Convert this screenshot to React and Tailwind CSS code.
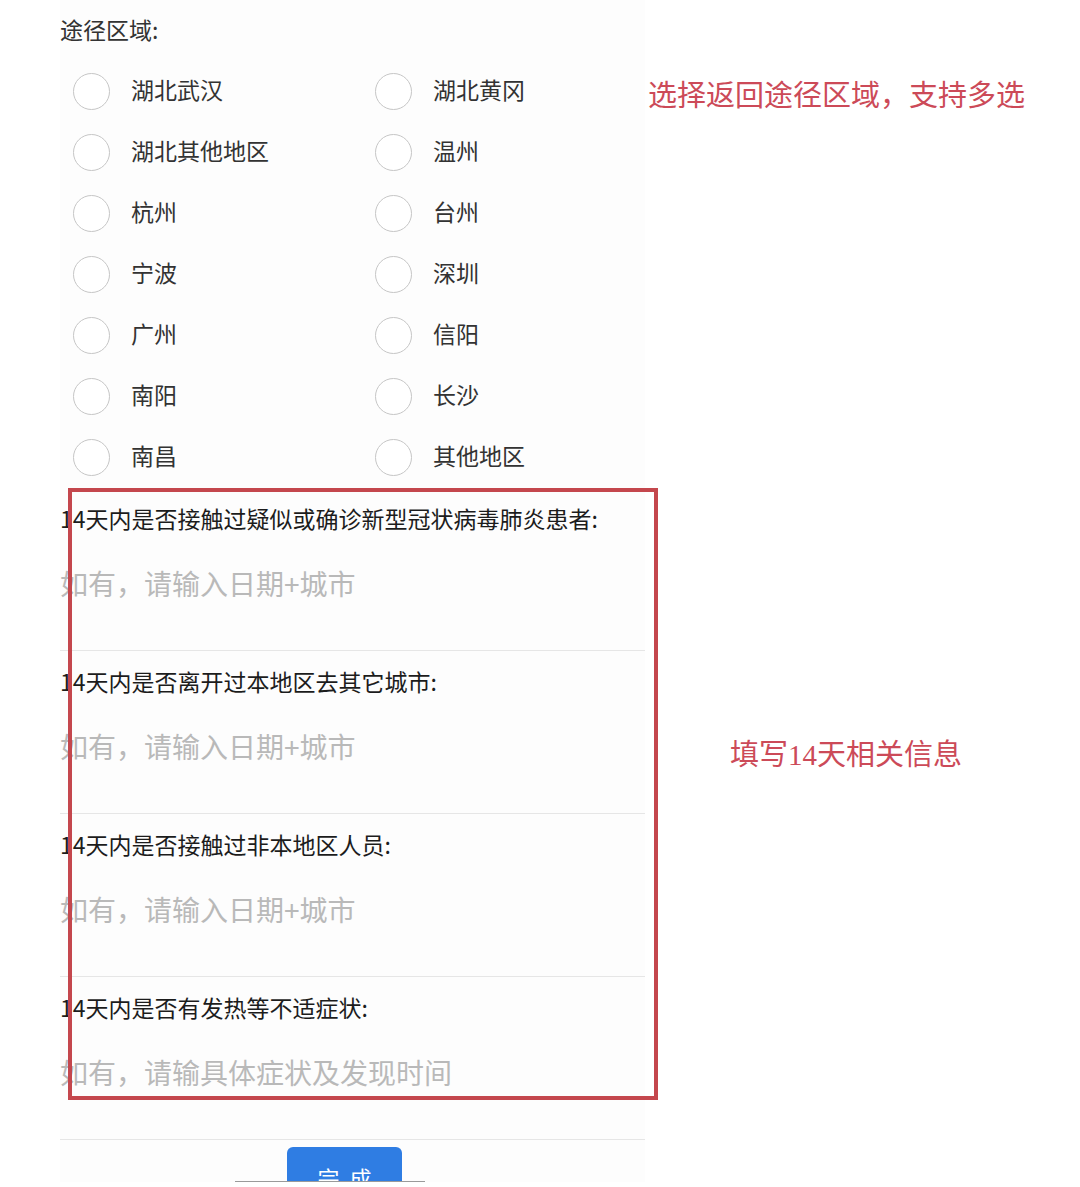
import React from "react";

const cjk = { fontFamily: '"Noto Sans CJK SC", "Noto Sans", sans-serif' };
const serif = { fontFamily: '"Liberation Serif", "Noto Sans CJK SC", serif' };

const regions = [
  ["湖北武汉", "湖北黄冈"],
  ["湖北其他地区", "温州"],
  ["杭州", "台州"],
  ["宁波", "深圳"],
  ["广州", "信阳"],
  ["南阳", "长沙"],
  ["南昌", "其他地区"],
];

const questions = [
  ["14天内是否接触过疑似或确诊新型冠状病毒肺炎患者:", "如有，请输入日期+城市"],
  ["14天内是否离开过本地区去其它城市:", "如有，请输入日期+城市"],
  ["14天内是否接触过非本地区人员:", "如有，请输入日期+城市"],
  ["14天内是否有发热等不适症状:", "如有，请输具体症状及发现时间"],
];

function Radio({ label }) {
  return (
    <div className="flex items-center h-[61px]">
      <div className="w-[37px] h-[37px] rounded-full border-[1.5px] border-[#c6c6c6] bg-white shrink-0" />
      <span className="ml-[21px] pb-[5px] text-[23px] leading-[30px] text-[#333]">{label}</span>
    </div>
  );
}

export default function App() {
  return (
    <div className="relative w-[1080px] h-[1187px] bg-white overflow-hidden" style={cjk}>
      <div className="flex">
        <div className="ml-[60px] w-[585px] flex flex-col bg-[#fdfdfd]">
          <div className="h-[61px] flex items-center pb-[4px] text-[23px] text-[#333] leading-[30px]">途径区域:</div>
          <div className="pl-[13px] grid grid-cols-[302px_1fr]">
            {regions.map(([a, b]) => (
              <React.Fragment key={a}>
                <Radio label={a} />
                <Radio label={b} />
              </React.Fragment>
            ))}
          </div>
          {questions.map(([q, p]) => (
            <div key={q} className="pt-[15px] pb-[49px] border-b border-[#e6e6e6] flex flex-col">
              <div className="text-[23px] leading-[31px] text-[#1c1c1c] whitespace-nowrap">{q}</div>
              <div className="mt-[31px] text-[28px] leading-[36px] text-[#b9b9b9]">{p}</div>
            </div>
          ))}
          <div className="pt-[7px] flex flex-col">
            <div className="ml-[227px] w-[115px] h-[34px] rounded-t-[6px] bg-[#2f7de3] overflow-hidden flex justify-center">
              <span className="pt-[15px] text-[22px] leading-[30px] text-white tracking-[10px] pl-[10px]">完成</span>
            </div>
            <div className="ml-[175px] w-[190px] h-[1px] bg-[#9a9a9a]" />
          </div>
        </div>
        <div className="flex flex-col" style={serif}>
          <div className="ml-[3px] mt-[78px] text-[29px] leading-[36px] text-[#cc4a58] whitespace-nowrap">
            选择返回途径区域，支持多选
          </div>
          <div className="ml-[85px] mt-[623px] text-[29px] leading-[36px] text-[#cc4a58] whitespace-nowrap">
            填写14天相关信息
          </div>
        </div>
      </div>
      <div className="absolute left-[68px] top-[488px] w-[590px] h-[612px] border-[4px] border-[#c4474d] pointer-events-none" />
    </div>
  );
}
